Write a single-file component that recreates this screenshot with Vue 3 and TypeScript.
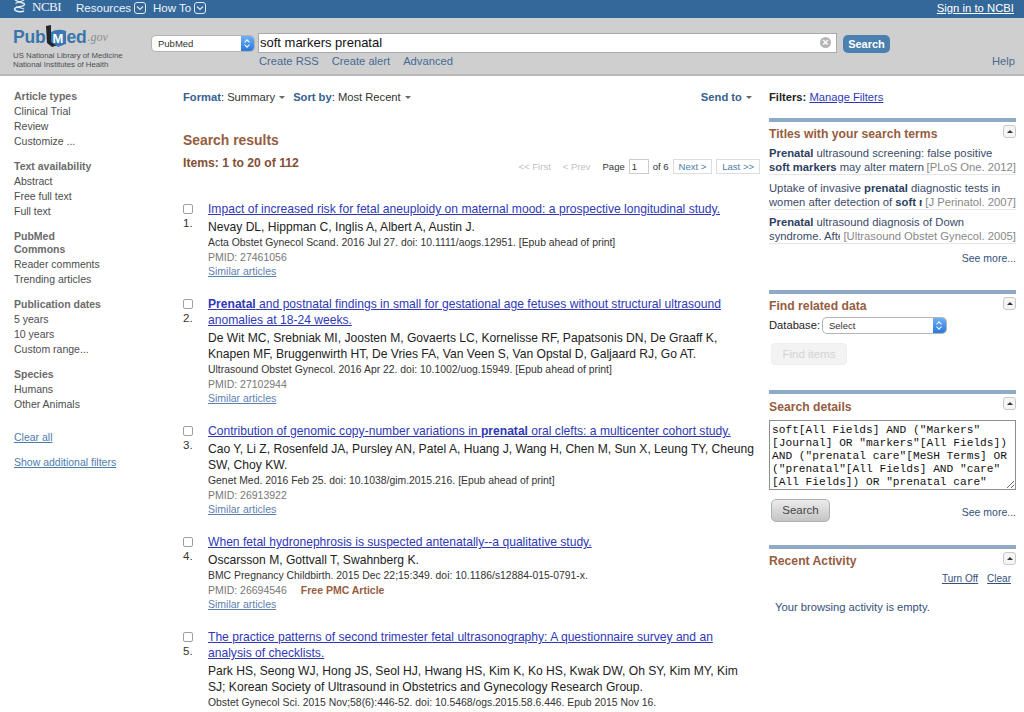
<script setup lang="ts">
interface Seg {
  t: string
  b?: boolean
}

interface Result {
  title: Seg[]
  authors: string
  cite: string
  pmid?: string
  free?: boolean
  similar: boolean
}

interface Related {
  head: Seg[]
  tail: Seg[]
  source: string
}

const filters = [
  { head: 'Article types', items: ['Clinical Trial', 'Review', 'Customize ...'] },
  { head: 'Text availability', items: ['Abstract', 'Free full text', 'Full text'] },
  { head: 'PubMed Commons', items: ['Reader comments', 'Trending articles'] },
  { head: 'Publication dates', items: ['5 years', '10 years', 'Custom range...'] },
  { head: 'Species', items: ['Humans', 'Other Animals'] },
]

const results: Result[] = [
  {
    title: [{ t: 'Impact of increased risk for fetal aneuploidy on maternal mood: a prospective longitudinal study.' }],
    authors: 'Nevay DL, Hippman C, Inglis A, Albert A, Austin J.',
    cite: 'Acta Obstet Gynecol Scand. 2016 Jul 27. doi: 10.1111/aogs.12951. [Epub ahead of print]',
    pmid: '27461056',
    similar: true,
  },
  {
    title: [
      { t: 'Prenatal', b: true },
      { t: ' and postnatal findings in small for gestational age fetuses without structural ultrasound anomalies at 18-24 weeks.' },
    ],
    authors: 'De Wit MC, Srebniak MI, Joosten M, Govaerts LC, Kornelisse RF, Papatsonis DN, De Graaff K, Knapen MF, Bruggenwirth HT, De Vries FA, Van Veen S, Van Opstal D, Galjaard RJ, Go AT.',
    cite: 'Ultrasound Obstet Gynecol. 2016 Apr 22. doi: 10.1002/uog.15949. [Epub ahead of print]',
    pmid: '27102944',
    similar: true,
  },
  {
    title: [
      { t: 'Contribution of genomic copy-number variations in ' },
      { t: 'prenatal', b: true },
      { t: ' oral clefts: a multicenter cohort study.' },
    ],
    authors: 'Cao Y, Li Z, Rosenfeld JA, Pursley AN, Patel A, Huang J, Wang H, Chen M, Sun X, Leung TY, Cheung SW, Choy KW.',
    cite: 'Genet Med. 2016 Feb 25. doi: 10.1038/gim.2015.216. [Epub ahead of print]',
    pmid: '26913922',
    similar: true,
  },
  {
    title: [{ t: 'When fetal hydronephrosis is suspected antenatally--a qualitative study.' }],
    authors: 'Oscarsson M, Gottvall T, Swahnberg K.',
    cite: 'BMC Pregnancy Childbirth. 2015 Dec 22;15:349. doi: 10.1186/s12884-015-0791-x.',
    pmid: '26694546',
    free: true,
    similar: true,
  },
  {
    title: [{ t: 'The practice patterns of second trimester fetal ultrasonography: A questionnaire survey and an analysis of checklists.' }],
    authors: 'Park HS, Seong WJ, Hong JS, Seol HJ, Hwang HS, Kim K, Ko HS, Kwak DW, Oh SY, Kim MY, Kim SJ; Korean Society of Ultrasound in Obstetrics and Gynecology Research Group.',
    cite: 'Obstet Gynecol Sci. 2015 Nov;58(6):446-52. doi: 10.5468/ogs.2015.58.6.446. Epub 2015 Nov 16.',
    similar: false,
  },
]

const related: Related[] = [
  {
    head: [{ t: 'Prenatal', b: true }, { t: ' ultrasound screening: false positive' }],
    tail: [{ t: 'soft markers', b: true }, { t: ' may alter maternal representations' }],
    source: '[PLoS One. 2012]',
  },
  {
    head: [{ t: 'Uptake of invasive ' }, { t: 'prenatal', b: true }, { t: ' diagnostic tests in' }],
    tail: [{ t: 'women after detection of ' }, { t: 'soft markers', b: true }],
    source: '[J Perinatol. 2007]',
  },
  {
    head: [{ t: 'Prenatal', b: true }, { t: ' ultrasound diagnosis of Down' }],
    tail: [{ t: 'syndrome. After screening' }],
    source: '[Ultrasound Obstet Gynecol. 2005]',
  },
]

const details = 'soft[All Fields] AND ("Markers"[Journal] OR "markers"[All Fields]) AND ("prenatal care"[MeSH Terms] OR ("prenatal"[All Fields] AND "care"[All Fields]) OR "prenatal care"[All Fields])'
</script>

<template>
  <div class="page">
    <header class="topbar">
      <div class="topbar__left">
        <span class="ncbi">
          <svg class="ncbi__mark" width="13" height="15" viewBox="0 0 13 15" aria-hidden="true">
            <path d="M2 0C2 3.5 11.5 3 11.5 5.5 11.5 8 1.5 7.5 1.5 10 1.5 12.5 8 13.5 11 12" fill="none" stroke="#e6eef6" stroke-width="1.4" />
            <path d="M11.5 0C11.5 2.5 4 3 2.5 4.5" fill="none" stroke="#e6eef6" stroke-width="1.2" />
            <path d="M3 8C6 8.5 11 9 11 10.5" fill="none" stroke="#e6eef6" stroke-width="1.2" />
          </svg>
          NCBI
        </span>
        <span class="topbar__menu">Resources
          <svg class="chev" width="12" height="12" viewBox="0 0 12 12" aria-hidden="true">
            <rect x="0.5" y="0.5" width="11" height="11" rx="2.5" fill="none" stroke="#dfe9f3" />
            <path d="M3 4.5 6 7.5 9 4.5" fill="none" stroke="#dfe9f3" stroke-width="1.2" />
          </svg>
        </span>
        <span class="topbar__menu">How To
          <svg class="chev" width="12" height="12" viewBox="0 0 12 12" aria-hidden="true">
            <rect x="0.5" y="0.5" width="11" height="11" rx="2.5" fill="none" stroke="#dfe9f3" />
            <path d="M3 4.5 6 7.5 9 4.5" fill="none" stroke="#dfe9f3" stroke-width="1.2" />
          </svg>
        </span>
      </div>
      <a class="topbar__signin">Sign in to NCBI</a>
    </header>

    <section class="searchbar">
      <div class="brand">
        <div class="brand__logo">
          <span class="brand__pub">Pub</span>
          <span class="brand__m">
            <svg width="22" height="23" viewBox="0 0 22 23" aria-hidden="true">
              <path d="M1 1 6 0V15L13 20 7 22 2 18Z" fill="#23262b" />
              <path d="M6 7Q13 3 21 6V19L13 22 6 17Z" fill="#3a78b5" />
            </svg>
            <span class="brand__m-letter">M</span>
          </span>
          <span class="brand__pub">ed</span>
          <span class="brand__gov">.gov</span>
        </div>
        <div class="brand__sub">US National Library of Medicine<br>National Institutes of Health</div>
      </div>
      <div class="searchbar__main">
        <div class="searchbar__row">
          <div class="picker picker--db">
            <span>PubMed</span>
            <span class="picker__step"></span>
          </div>
          <div class="query">
            <span>soft markers prenatal</span>
            <span class="query__clear">×</span>
          </div>
          <button class="search-btn" type="button">Search</button>
        </div>
        <div class="searchbar__links">
          <a>Create RSS</a>
          <a>Create alert</a>
          <a>Advanced</a>
          <a class="searchbar__help">Help</a>
        </div>
      </div>
    </section>

    <main class="body">
      <aside class="filters">
        <div v-for="group in filters" :key="group.head" class="filters__group">
          <h4>{{ group.head }}</h4>
          <div v-for="item in group.items" :key="item" class="filters__item">{{ item }}</div>
        </div>
        <a class="filters__link filters__link--clear">Clear all</a>
        <a class="filters__link">Show additional filters</a>
      </aside>

      <section class="results">
        <div class="display">
          <span class="display__opt"><b>Format</b>: Summary <i class="caret"></i></span>
          <span class="display__opt"><b>Sort by</b>: Most Recent <i class="caret"></i></span>
          <span class="display__send"><b>Send to</b> <i class="caret"></i></span>
        </div>
        <h2 class="results__title">Search results</h2>
        <div class="results__bar">
          <h3 class="results__count">Items: 1 to 20 of 112</h3>
          <div class="pager">
            <span class="pager__off">&lt;&lt; First</span>
            <span class="pager__off">&lt; Prev</span>
            <span class="pager__page">Page</span>
            <span class="pager__input">1</span>
            <span class="pager__of">of 6</span>
            <a class="pager__btn">Next &gt;</a>
            <a class="pager__btn">Last &gt;&gt;</a>
          </div>
        </div>

        <article v-for="(r, i) in results" :key="i" class="result">
          <div class="result__side">
            <span class="result__check"></span>
            <span class="result__num">{{ i + 1 }}.</span>
          </div>
          <div class="result__main">
            <a class="result__title"><template v-for="(s, j) in r.title" :key="j"><b v-if="s.b">{{ s.t }}</b><template v-else>{{ s.t }}</template></template></a>
            <div class="result__authors">{{ r.authors }}</div>
            <div class="result__cite">{{ r.cite }}</div>
            <div v-if="r.pmid" class="result__pmid">PMID: {{ r.pmid }}<b v-if="r.free" class="result__free">Free PMC Article</b></div>
            <a v-if="r.similar" class="result__similar">Similar articles</a>
          </div>
        </article>
      </section>

      <aside class="rail">
        <div class="rail__filters"><b>Filters:</b> <a>Manage Filters</a></div>

        <section class="portlet portlet--titles">
          <button class="portlet__toggle" type="button"><i></i></button>
          <h3>Titles with your search terms</h3>
          <div v-for="(rel, i) in related" :key="i" class="rel">
            <div class="rel__line"><template v-for="(s, j) in rel.head" :key="j"><b v-if="s.b">{{ s.t }}</b><template v-else>{{ s.t }}</template></template></div>
            <div class="rel__split">
              <span class="rel__cut"><template v-for="(s, j) in rel.tail" :key="j"><b v-if="s.b">{{ s.t }}</b><template v-else>{{ s.t }}</template></template></span>
              <span class="rel__source">{{ rel.source }}</span>
            </div>
          </div>
          <a class="portlet__more">See more...</a>
        </section>

        <section class="portlet portlet--related">
          <button class="portlet__toggle" type="button"><i></i></button>
          <h3>Find related data</h3>
          <div class="related__db">
            <label>Database:</label>
            <div class="picker picker--rel">
              <span>Select</span>
              <span class="picker__step"></span>
            </div>
          </div>
          <button class="find-btn" type="button" disabled>Find items</button>
        </section>

        <section class="portlet portlet--details">
          <button class="portlet__toggle" type="button"><i></i></button>
          <h3>Search details</h3>
          <textarea class="details__text" readonly :value="details"></textarea>
          <div class="details__foot">
            <button class="details__btn" type="button">Search</button>
            <a class="portlet__more portlet__more--inline">See more...</a>
          </div>
        </section>

        <section class="portlet portlet--recent">
          <button class="portlet__toggle" type="button"><i></i></button>
          <h3>Recent Activity</h3>
          <div class="recent__links"><a>Turn Off</a><a>Clear</a></div>
          <p class="recent__empty">Your browsing activity is empty.</p>
        </section>
      </aside>
    </main>
  </div>
</template>

<style>
html,
body {
  margin: 0;
  height: 712px;
  overflow: hidden;
  background: #fff;
}
</style>

<style scoped>
.page {
  width: 1024px;
  height: 712px;
  overflow: hidden;
  font-family: "Liberation Sans", Arial, sans-serif;
  color: #222;
}

a {
  cursor: pointer;
}

.topbar {
  box-sizing: border-box;
  height: 18px;
  background: #35689a;
  color: #eef3f8;
  display: flex;
  justify-content: space-between;
  align-items: center;
  padding: 0 10px 3px 13px;
  font-size: 11.5px;
  overflow: hidden;
}

.topbar__left {
  display: flex;
  align-items: center;
  gap: 7px;
}

.ncbi {
  display: flex;
  align-items: center;
  gap: 6px;
  font-family: "Liberation Serif", serif;
  font-size: 13px;
  letter-spacing: -0.5px;
  margin-right: 8px;
  margin-top: -2px;
}

.ncbi__mark {
  margin-top: -1px;
}

.topbar__menu {
  display: flex;
  align-items: center;
  gap: 3px;
}

.topbar__signin {
  font-size: 11.3px;
  color: #fff;
  text-decoration: underline;
}

.searchbar {
  box-sizing: border-box;
  height: 58px;
  background: #cfcfcf;
  border-bottom: 2px solid #b9b9b9;
  display: flex;
  padding-left: 13px;
}

.brand {
  width: 139px;
  flex: none;
  padding-top: 5px;
}

.brand__logo {
  display: flex;
  align-items: flex-end;
  height: 24px;
  color: #3a76ad;
  font-size: 17.5px;
  font-weight: 700;
  line-height: 20px;
}

.brand__pub {
  letter-spacing: -0.2px;
}

.brand__m {
  position: relative;
  width: 21px;
  height: 23px;
  margin: 0 0 -1px;
}

.brand__m svg {
  display: block;
}

.brand__m-letter {
  position: absolute;
  left: 7px;
  top: 7px;
  color: #fff;
  font-size: 13px;
  line-height: 13px;
}

.brand__gov {
  font-family: "Liberation Serif", serif;
  font-style: italic;
  font-weight: 400;
  font-size: 12px;
  color: #8a8f94;
  margin-left: 1px;
}

.brand__sub {
  margin-top: 4px;
  font-size: 7.8px;
  line-height: 9px;
  color: #4a4f55;
}

.searchbar__main {
  flex: 1;
  padding: 14px 0 0;
  min-width: 0;
}

.searchbar__row {
  display: flex;
  align-items: center;
}

.picker {
  display: flex;
  justify-content: space-between;
  align-items: center;
  box-sizing: border-box;
  height: 15px;
  background: #fff;
  border-radius: 4px;
  box-shadow: 0 0 0 1px #b4b4b4;
  font-size: 9.5px;
  color: #333;
  padding-left: 6px;
  overflow: hidden;
}

.picker--db {
  width: 102px;
  margin: 2px 4px 0 0;
}

.picker--rel {
  width: 123px;
}

.picker__step {
  position: relative;
  width: 13px;
  height: 15px;
  background: linear-gradient(#6fb0f2, #2a78e0);
}

.picker__step::before,
.picker__step::after {
  content: "";
  position: absolute;
  left: 4px;
  width: 3px;
  height: 3px;
  border-left: 1px solid #fff;
  border-top: 1px solid #fff;
}

.picker__step::before {
  top: 4px;
  transform: rotate(45deg);
}

.picker__step::after {
  top: 7px;
  transform: rotate(225deg);
}

.query {
  box-sizing: border-box;
  width: 579px;
  height: 20px;
  background: #fff;
  border: 1px solid #a9a9a9;
  display: flex;
  align-items: center;
  justify-content: space-between;
  padding: 0 5px 0 1px;
  font-size: 13px;
  color: #111;
}

.query__clear {
  width: 11px;
  height: 11px;
  border-radius: 50%;
  background: #b5b5b5;
  color: #fff;
  font-size: 11px;
  font-weight: 700;
  line-height: 11px;
  text-align: center;
}

.search-btn {
  height: 18px;
  width: 47px;
  margin: 3px 0 0 6px;
  padding: 0;
  border: none;
  border-radius: 5px;
  background: #4a7fb0;
  color: #fff;
  font: 700 11px "Liberation Sans", Arial, sans-serif;
}

.searchbar__links {
  display: flex;
  gap: 13px;
  margin: 1px 0 0 107px;
  padding-right: 9px;
  font-size: 11.2px;
  line-height: 15px;
  color: #456a94;
}

.searchbar__help {
  margin-left: auto;
  color: #4d6c8c;
}

.body {
  display: flex;
  align-items: flex-start;
}

.filters {
  flex: none;
  width: 183px;
  box-sizing: border-box;
  padding: 14px 0 0 14px;
  font-size: 10.5px;
  color: #4d4d4d;
}

.filters__group {
  margin-bottom: 11px;
  width: 90px;
}

.filters__group h4 {
  margin: 0 0 1px;
  font-size: 10.5px;
  line-height: 13px;
  font-weight: 700;
  color: #6b6b6b;
  white-space: normal;
}

.filters__group:nth-child(1) h4,
.filters__group:nth-child(2) h4,
.filters__group:nth-child(4) h4 {
  white-space: nowrap;
}

.filters__item {
  line-height: 15px;
  white-space: nowrap;
}

.filters__link {
  display: block;
  width: max-content;
  margin-top: 12px;
  color: #4c7cab;
  text-decoration: underline;
  line-height: 13px;
}

.filters__link--clear {
  margin-top: 19px;
}

.results {
  flex: none;
  width: 577px;
  padding-top: 14px;
}

.display {
  display: flex;
  gap: 8px;
  font-size: 11.2px;
  line-height: 14px;
  color: #333;
}

.display b {
  color: #35608f;
}

.display__send {
  margin-left: auto;
  padding-right: 8px;
}

.caret {
  display: inline-block;
  margin-left: 1px;
  vertical-align: 2px;
  border: 3px solid transparent;
  border-top: 3px solid #666;
  border-bottom: 0;
}

.results__title {
  margin: 28px 0 0;
  font-size: 13.9px;
  line-height: 17px;
  color: #965c3f;
}

.results__bar {
  display: flex;
  justify-content: space-between;
}

.results__count {
  margin: 7px 0 0;
  font-size: 12.2px;
  line-height: 15px;
  color: #844f35;
}

.pager {
  display: flex;
  align-items: center;
  margin-top: 10px;
  font-size: 9.5px;
  color: #333;
}

.pager__off {
  color: #bfbfbf;
  margin-right: 12px;
}

.pager__input {
  box-sizing: border-box;
  width: 20px;
  height: 15px;
  margin: 0 4px;
  padding-left: 2px;
  border: 1px solid #ccc;
  line-height: 13px;
}

.pager__btn {
  box-sizing: border-box;
  height: 15px;
  margin-left: 4px;
  padding: 0 5px;
  line-height: 13px;
  color: #4c7cab;
  border: 1px solid #ddd;
}

.result {
  display: flex;
  padding-bottom: 18px;
}

.results__bar + .result {
  margin-top: 27px;
}

.result__side {
  flex: none;
  width: 25px;
  display: flex;
  flex-direction: column;
  font-size: 11.5px;
  color: #333;
}

.result__check {
  box-sizing: border-box;
  width: 10px;
  height: 10px;
  margin-top: 3px;
  border: 1px solid #9f9f9f;
  border-radius: 2px;
  background: #fff;
}

.result__num {
  line-height: 14px;
  margin-top: 2px;
}

.result__main {
  flex: 1;
  min-width: 0;
  padding-right: 3px;
}

.result__title {
  display: block;
  font-size: 12.1px;
  line-height: 16px;
  color: #2f38b8;
  text-decoration: underline;
}

.result__authors {
  margin-top: 2px;
  font-size: 12.1px;
  line-height: 16px;
  color: #222;
}

.result__cite {
  font-size: 10.4px;
  line-height: 15px;
  color: #333;
}

.result__pmid {
  font-size: 10.5px;
  line-height: 15px;
  color: #777;
}

.result__free {
  margin-left: 14px;
  color: #965c3f;
}

.result__similar {
  display: block;
  font-size: 10.5px;
  line-height: 13px;
  color: #5c7fb0;
  text-decoration: underline;
}

.rail {
  flex: none;
  width: 247px;
  margin-left: 9px;
  padding-top: 14px;
  font-size: 12px;
}

.rail__filters {
  font-size: 11.2px;
  line-height: 14px;
  color: #222;
}

.rail__filters a {
  color: #2f38b8;
  text-decoration: underline;
}

.portlet {
  position: relative;
  border-top: 4px solid #8faac6;
  padding-top: 4px;
}

.portlet h3 {
  margin: 0;
  font-size: 12.2px;
  line-height: 16px;
  color: #965c3f;
}

.portlet__toggle {
  position: absolute;
  top: 3px;
  right: 0;
  width: 13px;
  height: 13px;
  padding: 0;
  background: #f5f5f5;
  border: 1px solid #c8c8c8;
  border-radius: 3px;
}

.portlet__toggle i {
  display: block;
  margin: 0 auto;
  width: 0;
  border: 3px solid transparent;
  border-top: 0;
  border-bottom: 3px solid #333;
}

.portlet--titles {
  margin-top: 14px;
}

.rel {
  border-bottom: 1px solid #e6e6e6;
  font-size: 11.25px;
  line-height: 14px;
  color: #3a4a66;
  padding-top: 5.5px;
}

.rel:first-of-type {
  padding-top: 4px;
}

.rel b {
  color: #2c3e5f;
}

.rel__line {
  white-space: nowrap;
}

.rel__split {
  display: flex;
  justify-content: space-between;
  gap: 3px;
}

.rel__cut {
  flex: 1;
  min-width: 0;
  overflow: hidden;
  white-space: nowrap;
}

.rel__source {
  flex: none;
  color: #888;
}

.portlet__more {
  display: block;
  margin-top: 6.5px;
  width: max-content;
  margin-left: auto;
  font-size: 10.5px;
  line-height: 14px;
  color: #33517a;
}

.portlet--related {
  margin-top: 25px;
}

.related__db {
  display: flex;
  align-items: center;
  gap: 3px;
  margin-top: 4.5px;
  font-size: 11.2px;
  line-height: 15px;
}

.find-btn {
  display: block;
  width: 76px;
  height: 22px;
  margin: 9.5px 0 0 2px;
  padding: 0;
  border: 1px solid #eee;
  border-radius: 4px;
  background: #f3f3f3;
  color: #d2d2d2;
  font: 11.5px "Liberation Sans", Arial, sans-serif;
}

.portlet--details {
  margin-top: 25px;
}

.portlet--details h3 {
  padding-top: 1px;
}

.details__text {
  display: block;
  box-sizing: border-box;
  width: 247px;
  height: 70px;
  margin: 5px 0 0;
  padding: 3px 2px 2px;
  border: 1px solid #8e8e8e;
  font: 11.2px/13px "Liberation Mono", monospace;
  color: #111;
  overflow: hidden;
  resize: both;
  outline: none;
}

.details__foot {
  display: flex;
  justify-content: space-between;
  align-items: flex-end;
  margin-top: 9px;
}

.details__foot .portlet__more {
  margin: 0 0 3px;
}

.details__btn {
  width: 59px;
  height: 23px;
  margin-left: 2px;
  padding: 0;
  border: 1px solid #b0b0b0;
  border-radius: 5px;
  background: linear-gradient(#ececec, #c4c4c4);
  color: #444;
  font: 11.5px "Liberation Sans", Arial, sans-serif;
}

.portlet--recent {
  margin-top: 23px;
}

.recent__links {
  display: flex;
  justify-content: flex-end;
  gap: 9px;
  margin-top: 3.5px;
  padding-right: 5px;
  font-size: 10px;
  line-height: 13px;
}

.recent__links a {
  color: #33517a;
  text-decoration: underline;
}

.recent__empty {
  margin: 14.5px 0 0 6px;
  font-size: 11.2px;
  line-height: 14px;
  color: #33517a;
}
</style>
